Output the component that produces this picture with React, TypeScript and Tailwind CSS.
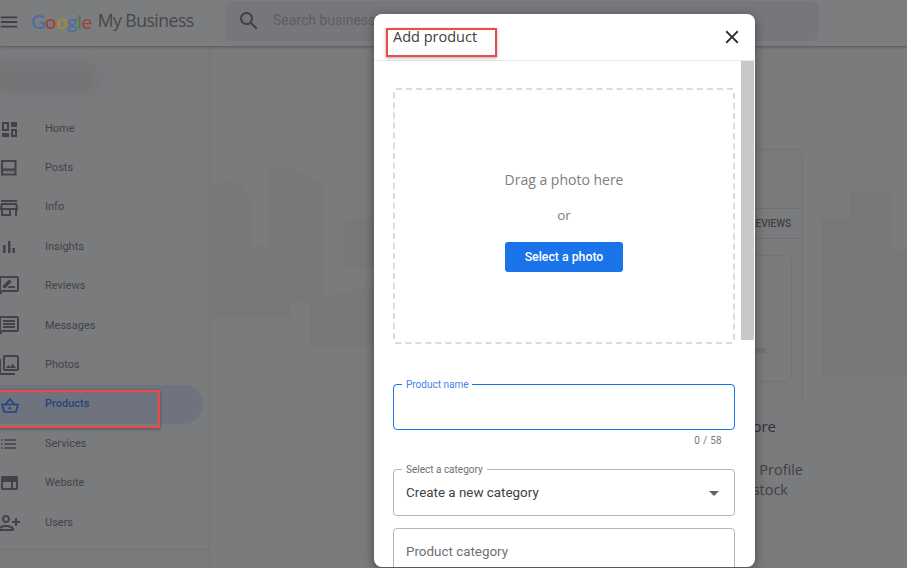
import type { ComponentType } from "react";
import {
  MdArrowDropDown,
  MdClose,
  MdMenu,
  MdOutlineMessage,
  MdOutlinePersonAdd,
  MdOutlinePhotoLibrary,
  MdOutlineRateReview,
  MdOutlineStore,
  MdSearch,
} from "react-icons/md";

type IconProps = { className?: string };

function HomeIcon({ className }: IconProps) {
  return (
    <svg viewBox="0 0 24 24" className={className} fill="currentColor">
      <path d="M5 5h7v9H5zm2 2v5h3V7z" fillRule="evenodd" />
      <path d="M14 5h6v5h-6zM5 16h7v4H5z" />
      <path d="M14 12h6v8h-6zm2 2v4h2v-4z" fillRule="evenodd" />
    </svg>
  );
}

function PostsIcon({ className }: IconProps) {
  return (
    <svg viewBox="0 0 24 24" className={className} fill="currentColor">
      <path d="M4 4h15.5v15.5H4zm2 2v6.5h11.5V6zm0 8.500v3h11.500v-3z" fillRule="evenodd" />
      <path d="M6 14h11.500v1.500H6z" opacity="0.5" />
    </svg>
  );
}

function InsightsIcon({ className }: IconProps) {
  return (
    <svg viewBox="0 0 24 24" className={className} fill="currentColor">
      <path d="M6 10h2.500v8H6zM11 6h2.500v12H11zM15.500 13H18v5h-2.500z" />
    </svg>
  );
}

function BasketIcon({ className }: IconProps) {
  return (
    <svg viewBox="0 0 24 24" className={className} fill="none" stroke="currentColor" strokeWidth="1.7">
      <path d="M8.500 11.500 13 6l4.500 5.500" />
      <path d="M5 11.500h16l-2.200 7.500H7.200z" />
      <circle cx="13" cy="15.200" r="1.300" fill="currentColor" stroke="none" />
    </svg>
  );
}

function ServicesIcon({ className }: IconProps) {
  return (
    <svg viewBox="0 0 24 24" className={className} fill="currentColor">
      <path d="M4 7.200h1.500v1.500H4zM4 11.200h1.500v1.500H4zM4 15.200h1.500v1.500H4z" />
      <path d="M7.500 7.200H19v1.500H7.500zM7.500 11.200H19v1.500H7.500zM7.500 15.200H19v1.500H7.500z" />
    </svg>
  );
}

function WebsiteIcon({ className }: IconProps) {
  return (
    <svg viewBox="0 0 24 24" className={className} fill="currentColor">
      <path
        d="M5.500 5h14A1.500 1.500 0 0 1 21 6.500v11a1.500 1.500 0 0 1-1.500 1.500h-14A1.500 1.500 0 0 1 4 17.500v-11A1.500 1.500 0 0 1 5.500 5zM6 11v6h8v-6zm10 0v6h3v-6z"
        fillRule="evenodd"
      />
    </svg>
  );
}

function UsersIcon({ className }: IconProps) {
  return <MdOutlinePersonAdd className={`${className} -scale-x-100`} />;
}

type NavItem = { label: string; icon: ComponentType<IconProps>; active?: boolean };

const navItems: NavItem[] = [
  { label: "Home", icon: HomeIcon },
  { label: "Posts", icon: PostsIcon },
  { label: "Info", icon: MdOutlineStore },
  { label: "Insights", icon: InsightsIcon },
  { label: "Reviews", icon: MdOutlineRateReview },
  { label: "Messages", icon: MdOutlineMessage },
  { label: "Photos", icon: MdOutlinePhotoLibrary },
  { label: "Products", icon: BasketIcon, active: true },
  { label: "Services", icon: ServicesIcon },
  { label: "Website", icon: WebsiteIcon },
  { label: "Users", icon: UsersIcon },
];

function Logo() {
  return (
    <div className="flex items-center gap-[6px] font-['Open_Sans',sans-serif] text-[17.600px] tracking-[-0.5px]">
      <span className="font-['Lato',sans-serif] text-[20px] font-medium tracking-[-0.4px]">
        <span className="text-[#4a6da3]">G</span>
        <span className="text-[#a0433c]">o</span>
        <span className="text-[#a58a2e]">o</span>
        <span className="text-[#4a6da3]">g</span>
        <span className="text-[#4d7a52]">l</span>
        <span className="text-[#a0433c]">e</span>
      </span>
      <span className="text-[#46474a]">My Business</span>
    </div>
  );
}

function Header() {
  return (
    <header className="relative z-10 flex h-[46px] shrink-0 items-center bg-[#7c7d7f] shadow-[0_1px_3px_rgba(0,0,0,0.3)]">
      <MdMenu className="mb-[3px] ml-[-2px] h-[22px] w-[22px] shrink-0 text-[#3f4043]" />
      <div className="mb-[5px] ml-[11px] w-[194px] shrink-0">
        <Logo />
      </div>
      <div className="mb-[5px] flex h-10 w-[594px] items-center rounded-lg bg-[#76777a] pl-3">
        <MdSearch className="h-6 w-6 text-[#3f4043]" />
        <span className="ml-3 font-['Roboto',sans-serif] text-[14px] text-[#5d5e61]">Search businesses</span>
      </div>
    </header>
  );
}

function Sidebar() {
  return (
    <aside className="flex w-[210px] shrink-0 flex-col border-r border-[#727375] font-['Roboto',sans-serif] text-[11px] text-[#424346]">
      <div className="flex h-[63.200px] shrink-0 items-center overflow-hidden">
        <div className="ml-[-6px] h-[30px] w-[102px] rounded bg-[#737476] blur-[6px]" />
      </div>
      <nav className="flex flex-col">
        {navItems.map((item) => {
          const Icon = item.icon;
          return (
            <div
              key={item.label}
              className={
                item.active
                  ? "mr-[6px] flex h-[39.400px] items-center rounded-r-full bg-[#6e737d] font-medium text-[#25437f]"
                  : "flex h-[39.400px] items-center"
              }
            >
              <Icon className="ml-[-3px] h-6 w-6 shrink-0" />
              <span className="ml-6">{item.label}</span>
            </div>
          );
        })}
      </nav>
      <div className="mt-[7px] border-t border-[#727375]" />
    </aside>
  );
}

function Scenery() {
  return (
    <svg
      className="absolute left-0 top-0 h-[522px] w-[697px]"
      viewBox="0 0 697 522"
      aria-hidden="true"
    >
      <g fill="#77787a">
        <path d="M0 255V150q0-14 18-14t19 14l5 8v100z" />
        <path d="M58 121h25l30 20v115H58z" />
        <path d="M0 217l28-17h25l27 19v53H0z" />
        <path d="M135 172h26v50h-26zM160 160h5v60h-5z" />
        <path d="M100 255l60-15h60v60H100z" />
        <path d="M640 145h42v185h-42zM612 172h35v158h-35zM665 204h32v126h-32z" />
      </g>
    </svg>
  );
}

function Main() {
  return (
    <main className="relative flex flex-1 flex-col items-end font-['Open_Sans',sans-serif]">
      <Scenery />
      <div className="relative mr-[104px] mt-[103px] h-[251px] w-[180px] rounded-t-lg border-x border-t border-[#727375]">
        <div className="mt-[58px] flex h-[31px] items-center justify-end border-y border-[#6f7072] pr-[11px] font-['Roboto',sans-serif] text-[10px] font-medium text-[#3f4043]">
          REVIEWS
        </div>
        <div className="ml-auto mr-[10px] mt-[16px] flex h-[127px] w-[160px] items-end justify-end rounded-md border border-[#727375] pb-[28px] pr-[25px]">
          <div className="h-[5px] w-[30px] rounded bg-[#6f7072]" />
        </div>
      </div>
      <div className="relative mr-[131px] mt-[15px] text-[15px] font-medium text-[#303134]">
        your store
      </div>
      <div className="relative mr-[104px] mt-[22px] text-[14.500px] leading-[20px] text-[#3f4043]">
        your Business Profile
      </div>
      <div className="relative mr-[119px] text-[14.500px] leading-[20px] text-[#3f4043]">
        what you have in stock
      </div>
    </main>
  );
}

function Modal() {
  return (
    <div className="absolute left-[374px] top-[14px] z-20 flex h-[553px] w-[381px] flex-col overflow-hidden rounded-lg bg-white shadow-[0_4px_12px_rgba(0,0,0,0.4)]">
      <div className="flex h-[47px] shrink-0 items-center justify-between border-b border-[#e5e6e8] pl-[19px] pr-[12px]">
        <span className="mb-[1px] font-['Open_Sans',sans-serif] text-[14.500px] text-[#3c4043]">
          Add product
        </span>
        <MdClose className="h-[22px] w-[22px] text-[#2a2b2e]" />
      </div>
      <div className="relative flex-1 overflow-hidden pl-[19px] pr-5">
        <div className="absolute right-px top-0 h-[279px] w-[13px] bg-[#c8c8c8]" />
        <div className="mt-[27px] flex h-[256px] flex-col items-center rounded-[3px] border-2 border-dashed border-[#dadce0] pt-[80px] font-['Open_Sans',sans-serif] text-[#7a7e82]">
          <div className="text-[14px] leading-5">Drag a photo here</div>
          <div className="mt-[15px] text-[13.500px] leading-5">or</div>
          <button className="mt-[17px] h-[30px] w-[118px] rounded-[3px] bg-[#1a73e8] font-['Roboto',sans-serif] text-[12.300px] font-medium text-white">
            Select a photo
          </button>
        </div>
        <div className="relative mt-[40px] h-[46px] w-[342px] rounded border-[1.500px] border-[#1a73e8]">
          <span className="absolute -top-[7px] left-[8px] bg-white px-[4px] font-['Roboto',sans-serif] text-[10px] leading-[14px] text-[#3d85ea]">
            Product name
          </span>
        </div>
        <div className="mt-[4px] w-[329px] text-right font-['Roboto',sans-serif] text-[10px] leading-[13px] tracking-[0.3px] text-[#75787c]">
          0 / 58
        </div>
        <div className="relative mt-[22px] flex h-[47px] w-[342px] items-center justify-between rounded border border-[#b3b5b8] pl-[12px] pr-2 font-['Roboto',sans-serif]">
          <span className="absolute -top-[7px] left-[8px] bg-white px-[4px] text-[10px] leading-[14px] text-[#6d7074]">
            Select a category
          </span>
          <span className="pt-[1px] text-[13.400px] text-[#3c4043]">Create a new category</span>
          <MdArrowDropDown className="h-6 w-6 text-[#5f6368]" />
        </div>
        <div className="mt-[12px] flex h-[47px] w-[342px] items-center rounded border border-[#b3b5b8] pl-[12px] pt-[2px] font-['Roboto',sans-serif] text-[13.400px] text-[#6d7074]">
          Product category
        </div>
      </div>
    </div>
  );
}

export default function App() {
  return (
    <div className="relative h-[568px] w-[907px] overflow-hidden bg-[#7a7b7d]">
      <div className="flex h-full flex-col">
        <Header />
        <div className="flex min-h-0 flex-1">
          <Sidebar />
          <Main />
        </div>
      </div>
      <Modal />
      {/* red annotation boxes on top of the screenshot */}
      <div className="absolute left-[386px] top-[28px] z-30 h-[29px] w-[111px] border-2 border-[#ef4a4a] shadow-[0_1px_3px_rgba(0,0,0,0.35)]" />
      <div className="absolute left-[-2px] top-[390px] z-30 h-[38px] w-[162px] border-2 border-[#ef4a4a] shadow-[0_1px_3px_rgba(0,0,0,0.35)]" />
    </div>
  );
}
